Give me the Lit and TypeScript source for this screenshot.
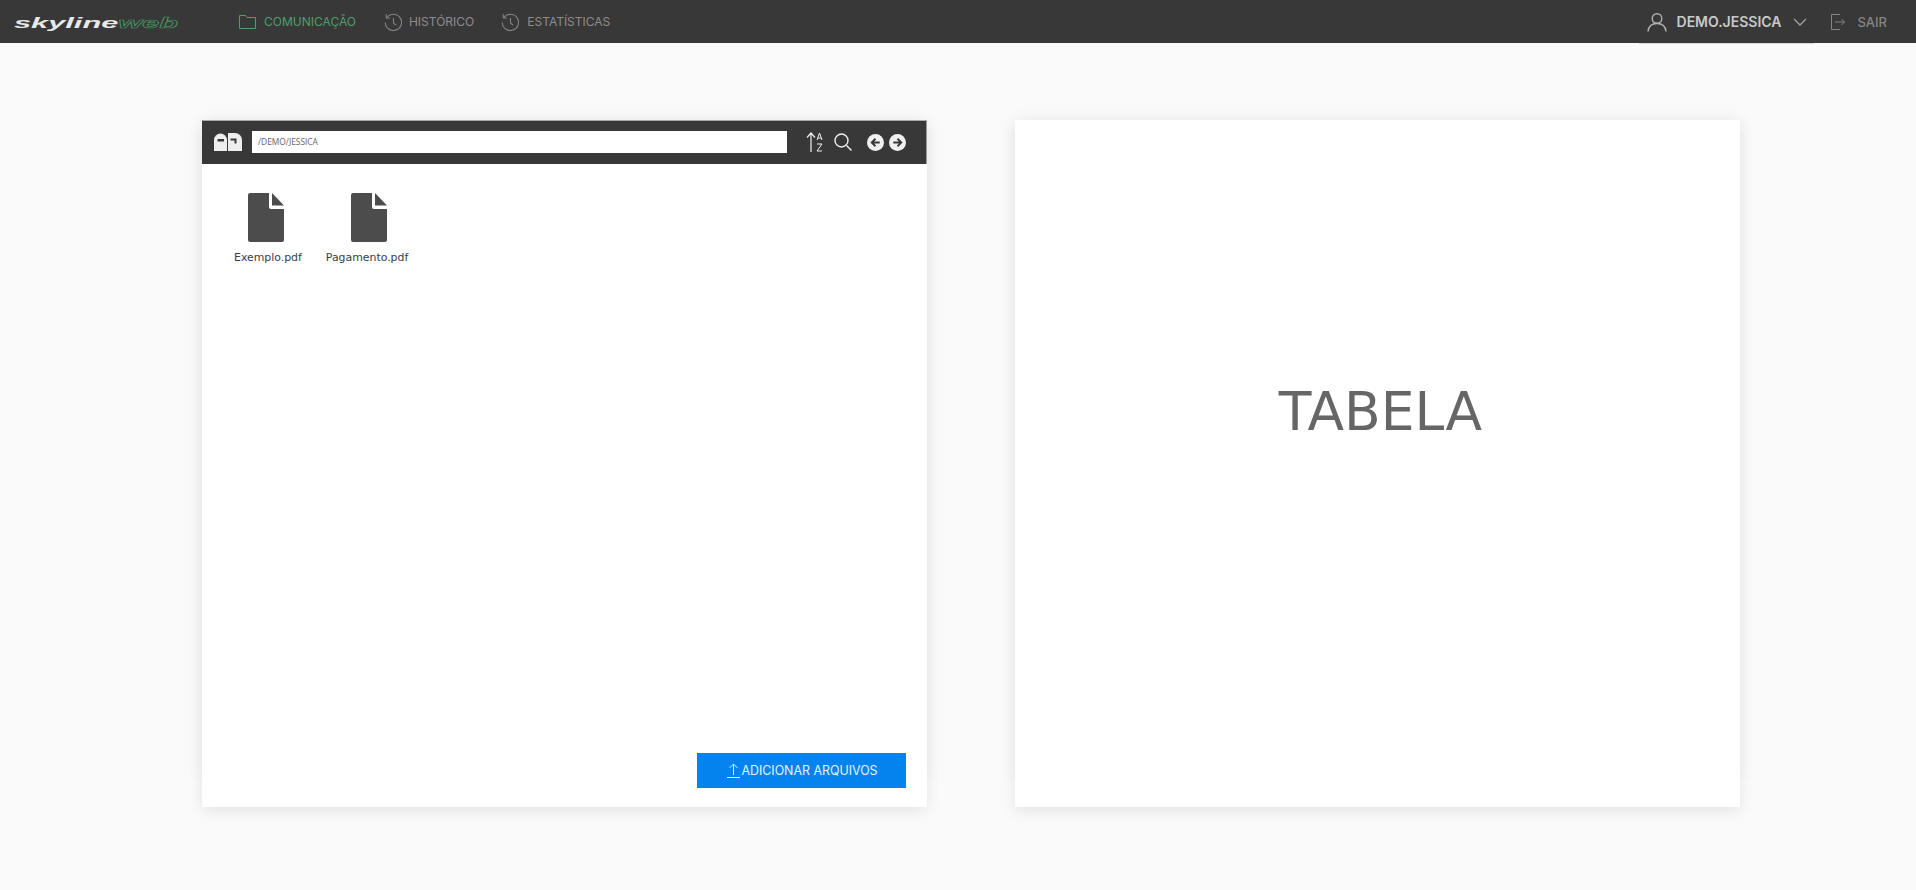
import { LitElement, html, css, svg } from "lit";
import { customElement } from "lit/decorators.js";

const historyIcon = svg`<path d="M3.2 5.2A9 9 0 1 1 1.500 10.500"/><path d="M2.500 1.500v4h4"/><path d="M10.500 5.500v5.500l3 2.500"/>`;

@customElement("app-root")
export class AppRoot extends LitElement {
  static styles = css`
    :host {
      display: block;
      min-height: 890px;
      background: #fafafa;
      font-family: Inter, "Liberation Sans", sans-serif;
    }
    svg {
      display: block;
      fill: none;
      stroke: currentColor;
      flex: none;
    }
    .topbar {
      height: 43px;
      background: #383838;
      display: flex;
      align-items: center;
      position: relative;
    }
    .logo-box {
      width: 238px;
      flex: none;
    }
    .logo {
      display: inline-block;
      margin-left: 14px;
      font: italic 700 15px "Liberation Sans", sans-serif;
      transform: scaleX(2.05);
      transform-origin: 0 50%;
      color: #e8e8e8;
      white-space: nowrap;
    }
    .logo span {
      color: transparent;
      -webkit-text-stroke: 0.6px #43915d;
    }
    .nav-item {
      display: flex;
      align-items: center;
      font-size: 12px;
      color: #8d8d8d;
      margin-right: 27px;
    }
    .nav-item svg {
      margin-right: 7px;
      color: #858585;
    }
    .nav-item.active {
      color: #4f9e6b;
      margin-right: 28px;
    }
    .nav-item.active svg {
      margin-left: 1px;
      margin-right: 8px;
      color: #4f9e6b;
    }
    .nav-item.last svg {
      margin-right: 8px;
    }
    .user {
      margin-left: auto;
      display: flex;
      align-items: center;
      color: #c9c9c9;
      font-size: 14px;
      font-weight: 600;
    }
    .user-ico {
      color: #b0b0b0;
      margin-right: 10px;
    }
    .chev {
      color: #a0a0a0;
      margin: 0 24px 0 12px;
    }
    .logout {
      display: flex;
      align-items: center;
      color: #858585;
      font-size: 13px;
      font-weight: 500;
      margin-right: 29px;
    }
    .logout svg {
      margin-right: 12px;
    }
    .user-line {
      position: absolute;
      left: 1639px;
      top: 43px;
      width: 175px;
      height: 1px;
      background: #d8d8d8;
    }
    main {
      display: flex;
      gap: 88px;
      padding: 77px 0 0 202px;
    }
    .card {
      position: relative;
      width: 725px;
      height: 687px;
      background: #fff;
      box-shadow: 0 4px 14px rgba(0, 0, 0, 0.09);
      display: flex;
      flex-direction: column;
    }
    /* fainter halo of the inner panel, stops short of the card's bottom */
    .card::before {
      content: "";
      position: absolute;
      inset: 0 0 27px 0;
      box-shadow: 0 0 22px rgba(0, 0, 0, 0.035);
      clip-path: inset(-30px -30px 0 -30px);
      pointer-events: none;
    }
    .toolbar {
      position: relative;
      height: 44px;
      box-sizing: border-box;
      background: #383838;
      display: flex;
      align-items: center;
      padding: 0 0 1px 12px;
      color: #f0f0f0;
      border-top: 1px solid #aaa;
      border-right: 1px solid #999;
    }
    .mailbox {
      fill: #eee;
      stroke: none;
    }
    .mailbox .cut {
      fill: #383838;
    }
    .path {
      width: 535px;
      height: 22px;
      margin-left: 10px;
      box-sizing: border-box;
      background: #fff;
      color: #666;
      font: 8.400px "Open Sans", sans-serif;
      line-height: 22px;
      padding-left: 6px;
      margin-right: 19px;
    }
    .sort {
      margin-right: 11px;
    }
    .find {
      margin-right: 15px;
    }
    .arrow {
      margin-right: 5px;
    }
    .files {
      position: relative;
      flex: 1;
      display: flex;
      gap: 24px;
      padding: 29px 0 0 32px;
    }
    .file {
      display: flex;
      flex-direction: column;
      align-items: center;
      color: #3c3c3c;
      font: 10.900px "DejaVu Sans", sans-serif;
      white-space: nowrap;
    }
    .file svg {
      fill: #4c4c4c;
      stroke: none;
      margin-bottom: 9px;
    }
    .file:first-child svg {
      margin-right: 3px;
    }
    .file:last-child svg {
      margin-left: 4px;
    }
    .actions {
      position: relative;
      display: flex;
      justify-content: flex-end;
      padding: 0 21px 19px 0;
    }
    .add {
      width: 209px;
      height: 35px;
      background: #0483ee;
      color: #e6f2fd;
      display: flex;
      align-items: center;
      justify-content: center;
      font-size: 12.400px;
    }
    .add svg {
      margin: 0 1px 0 2px;
    }
    .table {
      align-items: center;
      justify-content: center;
      padding-bottom: 104px;
      box-sizing: border-box;
    }
    .table div {
      font: 53.500px "DejaVu Sans", sans-serif;
      color: #666;
      margin: 0 0 0 6px;
    }
  `;

  render() {
    return html`
      <header class="topbar">
        <div class="logo-box"><div class="logo">skyline<span>web</span></div></div>
        <div class="nav-item active">
          <svg width="17" height="14" viewBox="0 0 17 14"><path d="M.500 13.500V.500h6l1.500 2h8.500v11H.500z"/></svg>
          COMUNICAÇÃO
        </div>
        <div class="nav-item">
          <svg width="18" height="18" viewBox="0 0 20 20" stroke-width="1.200">${historyIcon}</svg>
          HISTÓRICO
        </div>
        <div class="nav-item last">
          <svg width="18" height="18" viewBox="0 0 20 20" stroke-width="1.200">${historyIcon}</svg>
          ESTATÍSTICAS
        </div>
        <div class="user">
          <svg class="user-ico" width="20" height="20" viewBox="0 0 20 20" stroke-width="1.400"><circle cx="10" cy="6.500" r="4.800"/><path d="M1 19.500c.5-5 4-8 9-8s8.500 3 9 8"/></svg>
          DEMO.JESSICA
          <svg class="chev" width="14" height="8" viewBox="0 0 14 8" stroke-width="1.300"><path d="M1 1l6 6 6-6"/></svg>
        </div>
        <div class="logout">
          <svg width="14" height="16" viewBox="0 0 14 16" stroke-width="1"><path d="M9 .500H.500v15H9"/><path d="M4 8h9.500M10.500 5l3 3-3 3"/></svg>
          SAIR
        </div>
        <div class="user-line"></div>
      </header>
      <main>
        <section class="card">
          <div class="toolbar">
            <svg class="mailbox" width="28" height="18" viewBox="0 0 28 18">
              <path d="M0 18V7a6.500 6.500 0 0 1 13 0v11z"/>
              <path d="M14 18V0h7a7 7 0 0 1 7 7v11z"/>
              <path class="cut" d="M3.500 6h6.500v2.500H3.500z"/>
              <path class="cut" d="M16.500 5.500h6v5h-2v-3h-4z"/>
            </svg>
            <div class="path">/DEMO/JESSICA</div>
            <svg class="sort" width="17" height="20" viewBox="0 0 17 20" stroke-width="1.200"><path d="M5 20V1M1 5.500L5 1l4 4.500"/><path d="M11 8l2.500-7L16 8M12 6h3M11 12h5l-5 7h5" stroke-width="1"/></svg>
            <svg class="find" width="18" height="18" viewBox="0 0 18 18" stroke-width="1.400"><circle cx="7.500" cy="7.500" r="6.500"/><path d="M12.500 12.500l5 5"/></svg>
            <svg class="arrow" width="17" height="17" viewBox="0 0 18 18"><circle cx="9" cy="9" r="9" fill="#f0f0f0" stroke="none"/><path d="M13.500 9h-8M9 5L5 9l4 4" stroke="#383838" stroke-width="2"/></svg>
            <svg class="arrow" width="17" height="17" viewBox="0 0 18 18"><circle cx="9" cy="9" r="9" fill="#f0f0f0" stroke="none"/><path d="M4.500 9h8M9 5l4 4-4 4" stroke="#383838" stroke-width="2"/></svg>
          </div>
          <div class="files">
            ${["Exemplo.pdf", "Pagamento.pdf"].map(
              (name) => html`<div class="file">
                <svg width="36" height="49" viewBox="0 0 36 49"><path d="M2 0h19v14a2 2 0 0 0 2 2h13v31a2 2 0 0 1-2 2H2a2 2 0 0 1-2-2V2a2 2 0 0 1 2-2z"/><path d="M24 0l12 12.500H24z"/></svg>
                ${name}
              </div>`
            )}
          </div>
          <div class="actions">
            <div class="add">
              <svg width="13" height="15" viewBox="0 0 13 15" stroke-width="1"><path d="M6.500 12V1M2.500 5l4-4 4 4M0 14.500h13"/></svg>
              ADICIONAR ARQUIVOS
            </div>
          </div>
        </section>
        <section class="card table"><div>TABELA</div></section>
      </main>
    `;
  }
}
